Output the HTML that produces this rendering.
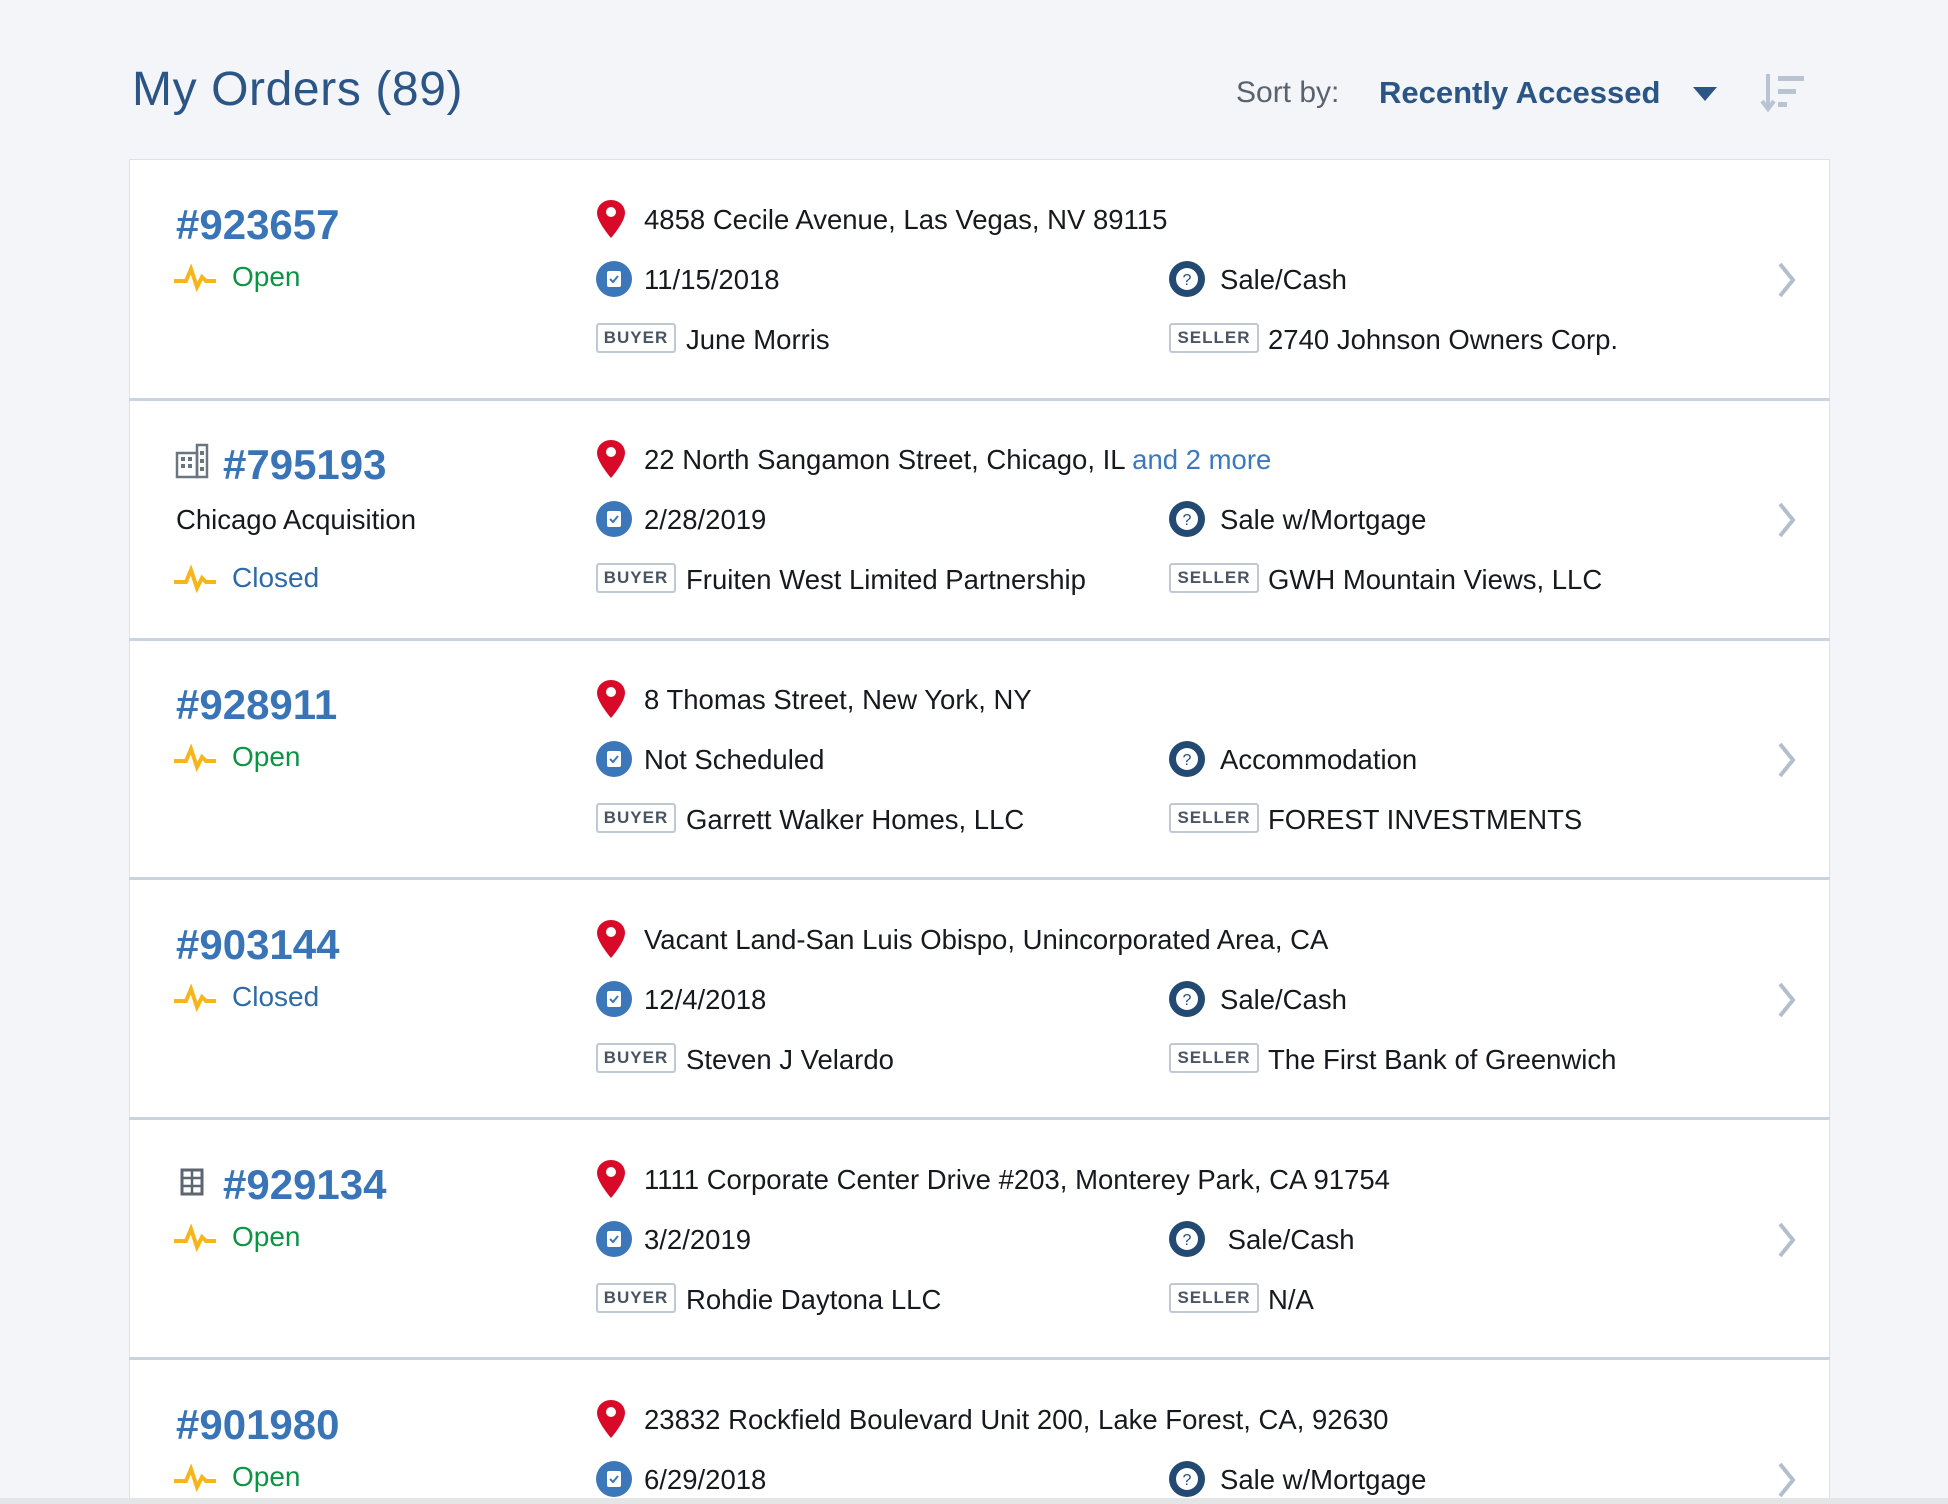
<!DOCTYPE html>
<html><head><meta charset="utf-8"><style>
*{margin:0;padding:0;box-sizing:border-box}
body{width:1948px;height:1504px;background:#f4f5f9;font-family:"Liberation Sans",sans-serif;position:relative;overflow:hidden;color:#1b1f24}
.t{position:absolute;white-space:nowrap;line-height:1}
.card{position:absolute;left:129px;top:159px;width:1701px;height:1345px;background:#fff;border:1px solid #dde2e8;border-bottom:none}
.sep{position:absolute;left:129px;width:1701px;height:3px;background:#c9d4e0}
.num{font-size:42px;font-weight:bold;color:#3974b6}
.txt{font-size:27.5px;color:#16191d}
.open{font-size:28px;color:#0b9444}
.closed{font-size:28px;color:#2f6aa8}
.badge{position:absolute;height:30px;border:2px solid #bfc9d4;border-radius:3px;font-size:17px;font-weight:bold;color:#4a5563;letter-spacing:1px;line-height:26px;text-align:center}
.more{color:#3a78c0}
svg{position:absolute}
.bottom{position:absolute;left:0;top:1498px;width:1948px;height:6px;background:#e4e5e7}
</style></head><body>
<div class="t" style="left:132px;top:66px;font-size:48px;color:#2a5585;letter-spacing:0.6px">My Orders (89)</div>
<div class="t" style="left:1236px;top:78px;font-size:30px;color:#5a6270">Sort by:</div>
<div class="t" style="left:1379px;top:77px;font-size:31px;font-weight:bold;color:#2a5585">Recently Accessed</div>
<svg style="left:1693px;top:87px" width="24" height="14"><path d="M0 0H24L12 14Z" fill="#2a5585"/></svg>
<svg style="left:1760px;top:72px" width="46" height="40"><path d="M8 2V36M2 29L8 37L14 29" stroke="#b8c4d2" stroke-width="4" fill="none"/><rect x="18" y="4" width="26" height="5" fill="#b8c4d2"/><rect x="18" y="17" width="18" height="5" fill="#b8c4d2"/><rect x="18" y="30" width="9" height="5" fill="#b8c4d2"/></svg>
<div class="card"></div>
<div class="sep" style="top:398px"></div>
<div class="sep" style="top:638px"></div>
<div class="sep" style="top:877px"></div>
<div class="sep" style="top:1117px"></div>
<div class="sep" style="top:1357px"></div>
<div id="rows"></div>
<div class="bottom"></div>
<script>
var rows=[
{n:"#923657",b:0,sub:null,st:"Open",addr:"4858 Cecile Avenue, Las Vegas, NV 89115",d:"11/15/2018",ty:"Sale/Cash",buyer:"June Morris",seller:"2740 Johnson Owners Corp."},
{n:"#795193",b:1,sub:"Chicago Acquisition",st:"Closed",addr:"22 North Sangamon Street, Chicago, IL <span class='more'>and 2 more</span>",d:"2/28/2019",ty:"Sale w/Mortgage",buyer:"Fruiten West Limited Partnership",seller:"GWH Mountain Views, LLC"},
{n:"#928911",b:0,sub:null,st:"Open",addr:"8 Thomas Street, New York, NY",d:"Not Scheduled",ty:"Accommodation",buyer:"Garrett Walker Homes, LLC",seller:"FOREST INVESTMENTS"},
{n:"#903144",b:0,sub:null,st:"Closed",addr:"Vacant Land-San Luis Obispo, Unincorporated Area, CA",d:"12/4/2018",ty:"Sale/Cash",buyer:"Steven J Velardo",seller:"The First Bank of Greenwich"},
{n:"#929134",b:2,sub:null,st:"Open",addr:"1111 Corporate Center Drive #203, Monterey Park, CA 91754",d:"3/2/2019",ty:"&nbsp;Sale/Cash",buyer:"Rohdie Daytona LLC",seller:"N/A"},
{n:"#901980",b:0,sub:null,st:"Open",addr:"23832 Rockfield Boulevard Unit 200, Lake Forest, CA, 92630",d:"6/29/2018",ty:"Sale w/Mortgage",buyer:"",seller:""}
];
var h="";
rows.forEach(function(r,i){
var T=159+240*i;
var nx=r.b?223:176;
if(r.b==1)h+='<svg style="left:175px;top:'+(T+44)+'px" width="34" height="36"><rect x="2" y="10" width="20" height="24" fill="none" stroke="#6b7580" stroke-width="2.5"/><rect x="22" y="2" width="10" height="32" fill="none" stroke="#6b7580" stroke-width="2.5"/><g fill="#6b7580"><rect x="6" y="14" width="4" height="4"/><rect x="13" y="14" width="4" height="4"/><rect x="6" y="21" width="4" height="4"/><rect x="13" y="21" width="4" height="4"/><rect x="25" y="8" width="4" height="4"/><rect x="25" y="16" width="4" height="4"/><rect x="25" y="24" width="4" height="4"/></g></svg>';
if(r.b==2)h+='<svg style="left:180px;top:'+(T+49)+'px" width="24" height="28"><rect x="2" y="2" width="20" height="24" fill="none" stroke="#5d6670" stroke-width="3"/><path d="M2 10H22M2 18H22M12 2V26" stroke="#5d6670" stroke-width="2.5"/></svg>';
h+='<div class="t num" style="left:'+nx+'px;top:'+(T+45)+'px">'+r.n+'</div>';
var sy=r.sub?T+180:T+119;
if(r.sub)h+='<div class="t txt" style="left:176px;top:'+(T+107)+'px">'+r.sub+'</div>';
h+='<svg style="left:174px;top:'+(sy-14)+'px" width="42" height="28"><path d="M0 17H12L17 5L23 23L28 13L32 17H42" stroke="#f6b619" stroke-width="4" fill="none" stroke-linejoin="miter"/></svg>';
h+='<div class="t '+(r.st=="Open"?"open":"closed")+'" style="left:232px;top:'+(sy-15)+'px">'+r.st+'</div>';
h+='<svg style="left:596px;top:'+(T+40)+'px" width="30" height="40"><path d="M15 1C7 1 1 7 1 14C1 23 15 39 15 39C15 39 29 23 29 14C29 7 23 1 15 1Z" fill="#d80a28"/><circle cx="15" cy="13" r="5" fill="#fff"/></svg>';
h+='<div class="t txt" style="left:644px;top:'+(T+47)+'px">'+r.addr+'</div>';
h+='<svg style="left:596px;top:'+(T+102)+'px" width="36" height="36"><circle cx="18" cy="18" r="18" fill="#3c78b9"/><rect x="11" y="10" width="14" height="16" rx="2" fill="#fff"/><path d="M14 18L17 21L22 15" stroke="#3c78b9" stroke-width="2" fill="none"/></svg>';
h+='<div class="t txt" style="left:644px;top:'+(T+107)+'px">'+r.d+'</div>';
h+='<svg style="left:1169px;top:'+(T+102)+'px" width="36" height="36"><circle cx="18" cy="18" r="18" fill="#234a73"/><circle cx="18" cy="18" r="11" fill="#fff"/><text x="18" y="24" font-size="16" font-family="Liberation Sans" text-anchor="middle" fill="#234a73">?</text></svg>';
h+='<div class="t txt" style="left:1220px;top:'+(T+107)+'px">'+r.ty+'</div>';
h+='<svg style="left:1776px;top:'+(T+102)+'px" width="22" height="38"><path d="M4 3L17 19L4 35" stroke="#b3bfcc" stroke-width="4" fill="none"/></svg>';
if(r.buyer){
h+='<div class="badge" style="left:596px;top:'+(T+164)+'px;width:80px">BUYER</div>';
h+='<div class="t txt" style="left:686px;top:'+(T+167)+'px">'+r.buyer+'</div>';
h+='<div class="badge" style="left:1169px;top:'+(T+164)+'px;width:90px">SELLER</div>';
h+='<div class="t txt" style="left:1268px;top:'+(T+167)+'px">'+r.seller+'</div>';
}
});
document.getElementById("rows").innerHTML=h;
</script>
</body></html>
